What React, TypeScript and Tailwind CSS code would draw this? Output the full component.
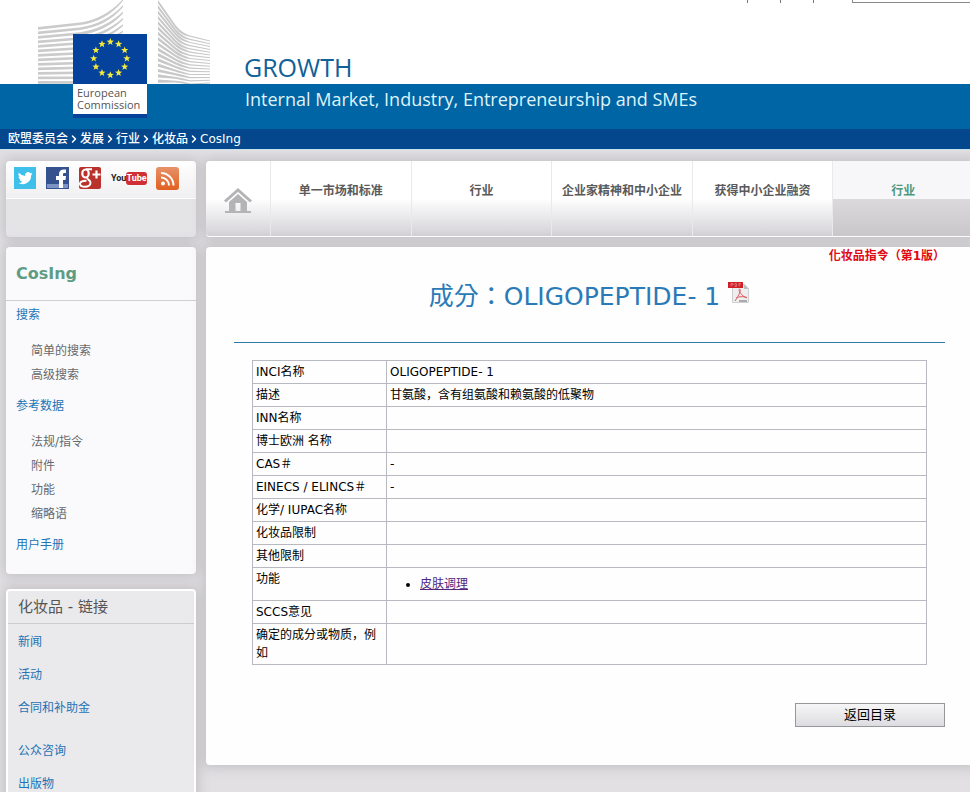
import { ChevronRight } from "lucide-react";

const crumbs = ["欧盟委员会", "发展", "行业", "化妆品", "CosIng"];
const tabs = ["单一市场和标准", "行业", "企业家精神和中小企业", "获得中小企业融资", "行业"];

const menu = [
  { title: "搜索", items: ["简单的搜索", "高级搜索"] },
  { title: "参考数据", items: ["法规/指令", "附件", "功能", "缩略语"] },
  { title: "用户手册", items: [] },
];

const linkGroups = [
  ["新闻", "活动", "合同和补助金"],
  ["公众咨询", "出版物"],
];

const rows = [
  { label: "INCI名称", value: "OLIGOPEPTIDE- 1" },
  { label: "描述", value: "甘氨酸，含有组氨酸和赖氨酸的低聚物" },
  { label: "INN名称", value: "" },
  { label: "博士欧洲 名称", value: "" },
  { label: "CAS＃", value: "-" },
  { label: "EINECS / ELINCS＃", value: "-" },
  { label: "化学/ IUPAC名称", value: "" },
  { label: "化妆品限制", value: "" },
  { label: "其他限制", value: "" },
  { label: "功能", value: "皮肤调理", list: true },
  { label: "SCCS意见", value: "" },
  { label: "确定的成分或物质，例如", value: "" },
];

function star(cx: number, cy: number, r: number) {
  return Array.from({ length: 10 }, (_, i) => {
    const a = (Math.PI / 5) * i - Math.PI / 2;
    const q = i % 2 ? r * 0.42 : r;
    return `${(cx + q * Math.cos(a)).toFixed(2)},${(cy + q * Math.sin(a)).toFixed(2)}`;
  }).join(" ");
}

function Logo() {
  return (
    <div className="absolute left-[38px] top-0 w-[172px]">
      <svg width="172" height="84" viewBox="38 0 172 84" className="block" aria-hidden="true">
        {Array.from({ length: 13 }, (_, i) => {
          const l = 27 + i * 4.5;
          const m = 21 + i * 4.9;
          const r = -1 + i * 6.3;
          return (
            <path
              key={i}
              fill="#cbcbcb"
              d={`M38 ${l} L80 ${m + 1.5} Q105 ${m - 2} 123 ${r} V${r + 1.8} Q106 ${m + 1} 80 ${m + 4} L38 ${l + 2.8}Z`}
            />
          );
        })}
        {Array.from({ length: 16 }, (_, i) => {
          const l = i * 5.3;
          const m = 33 + i * 3.2;
          const r = 40.5 + i * 2.8;
          return (
            <path
              key={i}
              fill="#c8c8c8"
              d={`M158 ${l} L176 ${l + (m - l) * 0.78} Q182 ${m} 190 ${m + 2.5} L210 ${r} V${r + 1} L190 ${m + 3.7} Q180 ${m + 2} 175 ${l + (m - l) * 0.78 + 1.8} L158 ${l + 3.2}Z`}
            />
          );
        })}
        <rect x="73" y="34" width="74" height="50" fill="#04429b" />
        {Array.from({ length: 12 }, (_, i) => {
          const a = (Math.PI / 6) * i;
          return (
            <polygon
              key={i}
              fill="#f4ea3c"
              points={star(110.3 + 16.6 * Math.sin(a), 58.5 - 16.6 * Math.cos(a), 3.8)}
            />
          );
        })}
      </svg>
      <p className="ml-[35px] h-[34px] w-[74px] border-b-4 border-[#04429b] bg-white pl-1 pt-[3px] font-['Open_Sans',sans-serif] text-[11px] leading-3 text-[#555]">
        European Commission
      </p>
    </div>
  );
}

function Twitter() {
  return (
    <svg width="22" height="22" viewBox="0 0 22 22">
      <rect width="22" height="22" fill="#3fc0ea" />
      <path
        fill="#fff"
        transform="translate(3.5 3.5) scale(.64)"
        d="M23.6 4.9c-.8.4-1.8.6-2.7.8 1-.6 1.7-1.5 2.1-2.6-.9.5-1.9.9-3 1.1a4.7 4.7 0 0 0-8.100 4.300A13.400 13.400 0 0 1 2.200 3.600a4.700 4.700 0 0 0 1.500 6.300c-.8 0-1.500-.2-2.100-.6 0 2.300 1.600 4.200 3.800 4.700-.7.2-1.400.2-2.100.1a4.700 4.700 0 0 0 4.400 3.300A9.500 9.500 0 0 1 .7 19.300 13.400 13.400 0 0 0 21.300 7.400c.9-.7 1.700-1.500 2.300-2.500z"
      />
    </svg>
  );
}

function Facebook() {
  return (
    <svg width="23" height="22" viewBox="0 0 23 22">
      <rect width="23" height="22" fill="#35528f" />
      <rect x="1" y="17" width="21" height="4" fill="#7d93c4" />
      <path fill="#fff" d="M13 21v-8h-3V9h3V7c0-3 2-4.500 4.500-4.500H20V6h-1.500C17.300 6 17 6.500 17 7.500V9h3l-.5 4H17v8z" />
    </svg>
  );
}

function GooglePlus() {
  return (
    <svg width="22" height="22" viewBox="0 0 22 22">
      <rect width="22" height="22" rx="2" fill="#b9322b" />
      <g fill="none" stroke="#fff">
        <ellipse cx="6.500" cy="6.500" rx="3.200" ry="4" strokeWidth="2.200" />
        <path d="M7 2.200h6M8.500 10.500c-1 2 3 2.500 3 5.200 0 2.500-2.500 4-5.500 4s-5-1.200-5-3 2.500-3 6.500-3" strokeWidth="2" />
        <path d="M17.500 3.500v8M13.500 7.500h8" strokeWidth="2.200" />
      </g>
    </svg>
  );
}

function YouTube() {
  return (
    <span className="flex h-[22px] w-[35px] items-center font-['Roboto',sans-serif] text-[9px] font-bold leading-[13px] text-[#222]">
      You
      <span className="rounded-[3px] bg-[#cf2f35] text-white">Tube</span>
    </span>
  );
}

function Rss() {
  return (
    <svg width="23" height="23" viewBox="0 0 23 23">
      <defs>
        <linearGradient id="rss" x1="0" y1="0" x2="0" y2="1">
          <stop offset="0" stopColor="#e8926a" />
          <stop offset="1" stopColor="#e0601f" />
        </linearGradient>
      </defs>
      <rect width="23" height="23" rx="3" fill="url(#rss)" />
      <circle cx="7" cy="16.500" r="2" fill="#fff" />
      <path d="M5 10.500a8 8 0 0 1 8 8M5 6a12.500 12.500 0 0 1 12.500 12.500" fill="none" stroke="#fff" strokeWidth="2" />
    </svg>
  );
}

function Home() {
  return (
    <svg width="28" height="26" viewBox="0 0 28 26" aria-hidden="true">
      <path d="M1 13.500 14 2l13 11.500" fill="none" stroke="#b4b3b5" strokeWidth="3" />
      <path fill="#b4b3b5" d="M14 6 5 14v9H1v2h26v-2h-4v-9zM11.500 15h5v8h-5z" fillRule="evenodd" />
    </svg>
  );
}

function Pdf() {
  return (
    <svg width="22" height="24" viewBox="0 0 22 24" role="img" aria-label="PDF" className="self-start">
      <path d="M4.500 3.500h12l4 4v14h-16z" fill="#eeeeee" stroke="#cfcfcf" />
      <path d="M16 3.500v4.500h4.500z" fill="#bbb" />
      <path d="M0 1h15v6H0z" fill="#cf2027" />
      <path d="M3 5.500v-3h2v1.500H3M7 2.500v3h1.500v-3zM11 5.500v-3h2M11 4h1.500" fill="none" stroke="#f0989b" strokeWidth=".6" />
      <path d="M11.500 8c1.800 0 .5 5-4.500 12M11.500 8c-1.500 1 1.500 7 7.500 9M8 17c3-1.500 7-2 11-.5" fill="none" stroke="#dc5e63" />
      <path d="M11 19h8v2h-8z" fill="#aaa" />
    </svg>
  );
}

const socials = [
  { name: "Twitter", icon: <Twitter /> },
  { name: "Facebook", icon: <Facebook /> },
  { name: "Google+", icon: <GooglePlus /> },
  { name: "YouTube", icon: <YouTube /> },
  { name: "RSS", icon: <Rss /> },
];

export default function App() {
  return (
    <div className="min-h-screen overflow-hidden bg-[#e2e0e3] font-['DejaVu_Sans','Noto_Sans_CJK_SC',sans-serif] text-xs text-black">
      <header className="relative">
        <div className="flex h-[84px] flex-col justify-between bg-white">
          <div className="flex h-[3px] justify-end">
            <div className="mr-[38px] flex gap-8">
              <span className="w-px bg-[#777]" />
              <span className="w-px bg-[#777]" />
              <span className="w-px bg-[#777]" />
            </div>
            <select aria-label="语言" className="h-[3px] w-[118px] appearance-none border-b border-l border-[#888] bg-white" />
          </div>
          <div className="pl-[244px] font-['Open_Sans',sans-serif] text-[25px] leading-[34px] text-[#0f6197]">GROWTH</div>
        </div>
        <div className="h-[45px] bg-[#0065a4] pl-[245px] font-['Open_Sans',sans-serif] text-lg leading-[30px] text-[#dff3fb]">
          Internal Market, Industry, Entrepreneurship and SMEs
        </div>
        <Logo />
        <nav aria-label="路径" className="flex h-5 items-center bg-[#05478c] pl-2 text-white">
          {crumbs.map((c, i) => (
            <span key={c} className="flex items-center">
              {i > 0 && <ChevronRight size={12} strokeWidth={3} />}
              <a href="#" className="font-medium">{c}</a>
            </span>
          ))}
        </nav>
      </header>

      <div className="flex items-start gap-2.5 border-t border-[#c8e4f0] pl-1.5 pt-[11px]">
        <aside className="w-[190px] shrink-0">
          <div className="h-[76px] rounded bg-[#e4e3e5] shadow-[0_0_12px_3px_rgba(120,118,121,0.28)]">
            <div className="flex h-[38px] items-start gap-2.5 rounded-t border-b border-white bg-linear-to-b from-white to-[#f0eff1] pl-2 pt-1.5">
              {socials.map((s) => (
                <a key={s.name} href="#" aria-label={s.name}>{s.icon}</a>
              ))}
            </div>
          </div>

          <nav className="mt-2.5 rounded bg-[#fafafc] pb-[17px] shadow-[0_0_12px_3px_rgba(120,118,121,0.28)]">
            <h2 className="mb-0.5 border-b border-[#cfced1] px-2.5 text-base font-bold leading-[53px] text-[#5f9c83]">CosIng</h2>
            {menu.map((m) => (
              <div key={m.title} className="leading-6 not-last:mb-[7px]">
                <a href="#" className="block px-2.5 text-[#2473b5]">{m.title}</a>
                {m.items.length > 0 && (
                  <ul className="mt-3 pl-[25px] text-[#66696c]">
                    {m.items.map((t) => (
                      <li key={t}><a href="#">{t}</a></li>
                    ))}
                  </ul>
                )}
              </div>
            ))}
          </nav>

          <nav className="mt-[15px] rounded-t border-2 border-white bg-[#eae9eb] shadow-[0_0_12px_3px_rgba(120,118,121,0.28)]">
            <h2 className="mb-0.5 border-b border-[#cccbce] px-2.5 text-[15px] leading-8 text-[#555]">化妆品 - 链接</h2>
            {linkGroups.map((g) => (
              <ul key={g[0]} className="px-2.5 leading-[33px] text-[#2473b5] not-last:mb-2.5">
                {g.map((t) => (
                  <li key={t}><a href="#">{t}</a></li>
                ))}
              </ul>
            ))}
          </nav>
        </aside>

        <div className="-mr-[3px] min-w-0 flex-1">
          <nav className="flex h-[76px] overflow-hidden rounded-l border-b border-white bg-linear-to-b from-white from-50% to-[#d3d1d5] shadow-[0_0_12px_3px_rgba(120,118,121,0.28)]">
            <a href="#" aria-label="首页" className="flex w-[65px] items-center justify-center border-r border-[#e9e8ea] pt-1">
              <Home />
            </a>
            {tabs.map((t, i) => (
              <a
                key={i}
                href="#"
                className={
                  i === 4
                    ? "flex-1 bg-[linear-gradient(#f7f6f8_0_50%,#dbd9dc_51%,#c9c7ca)] pt-5 text-center font-bold leading-5 text-[#4d9a7f]"
                    : "flex-1 border-r border-[#e9e8ea] pt-5 text-center font-bold leading-5 text-[#5a5a5a]"
                }
              >
                {t}
              </a>
            ))}
          </nav>

          <main className="mt-2.5 rounded-l bg-[#fefefe] px-7 pb-[38px] shadow-[0_0_12px_3px_rgba(120,118,121,0.28)]">
            <p className="text-right font-['DejaVu_Sans','Noto_Sans_CJK_TC',sans-serif] font-bold leading-[18px] text-[#e00a14]">化妆品指令（第1版）</p>
            <h1 className="flex items-center justify-center gap-2 border-b border-[#2f7aa8] pb-[29px] pt-4 font-['DejaVu_Sans','Noto_Sans_CJK_TC',sans-serif] text-[25px] leading-8 text-[#2a7ab8]">
              成分：OLIGOPEPTIDE- 1
              <Pdf />
            </h1>
            <div className="px-[18px] pt-[17px]">
              <table className="w-full table-fixed border-collapse leading-[18px]">
                <tbody>
                  {rows.map((r) => (
                    <tr key={r.label}>
                      <th scope="row" className="w-[134px] border border-[#b9b9c1] px-[3px] py-0.5 text-left align-top font-normal">{r.label}</th>
                      <td className="border border-[#b9b9c1] px-[3px] py-0.5">
                        {r.list ? (
                          <ul className="list-disc py-[5px] pl-[30px]">
                            <li><a href="#" className="text-[#52267f] underline">{r.value}</a></li>
                          </ul>
                        ) : (
                          r.value
                        )}
                      </td>
                    </tr>
                  ))}
                </tbody>
              </table>
            </div>
            <div className="mt-[38px] flex justify-end">
              <button type="button" className="h-6 w-[150px] border border-[#97969b] bg-linear-to-b from-[#f6f6f7] to-[#dddce0] text-[13px] leading-5">返回目录</button>
            </div>
          </main>
        </div>
      </div>
    </div>
  );
}
